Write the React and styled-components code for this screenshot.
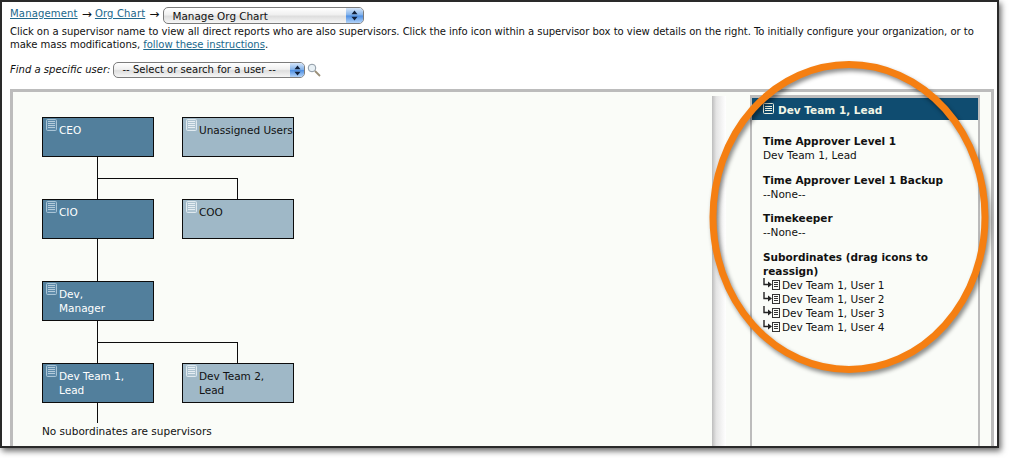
import styled, { createGlobalStyle } from "styled-components";

const GlobalStyle = createGlobalStyle`
  html, body {
    margin: 0;
    background: #ffffff;
  }
  body {
    height: 458px;
    overflow: hidden;
    font-family: "DejaVu Sans", Verdana, sans-serif;
    font-size: 10.5px;
    line-height: 14px;
    color: #111111;
  }
`;

const NodeIcon = ({ dark }) => (
  <IconSvg width="11" height="12" viewBox="0 0 11 12" fill="none">
    <rect
      x="0.5"
      y="0.5"
      width="10"
      height="11"
      rx="1"
      stroke={dark ? "#a9c4d6" : "#dfe9ef"}
      fill={dark ? "#5f8cab" : "#aec4d1"}
    />
    <path d="M2 2.5h7M2 4.5h7M2 6.5h7M2 8.5h7" stroke={dark ? "#b4cbda" : "#e6eef3"} />
  </IconSvg>
);

const HeaderIcon = () => (
  <HeaderIconSvg width="11" height="11" viewBox="0 0 11 11" fill="none" stroke="#f2f6e6">
    <rect x="0.5" y="0.5" width="10" height="10" rx="1" />
    <path d="M2 3.5h7M2 5.5h7M2 7.5h7" />
  </HeaderIconSvg>
);

const SubordinateIcon = () => (
  <IconSvg width="8" height="10" viewBox="0 0 8 10" fill="none" stroke="#333333">
    <rect x="0.5" y="0.5" width="7" height="9" />
    <path d="M2 2.5h4M2 4.5h4M2 6.5h4" />
  </IconSvg>
);

const ArrowIcon = () => (
  <ArrowSvg width="9" height="11" viewBox="0 0 9 11" fill="none" stroke="#222222">
    <path d="M1 0v6.5H5.5" strokeWidth="1.4" />
    <path d="M5 3.5v6l4-3z" fill="#222222" stroke="none" />
  </ArrowSvg>
);

const Stepper = ({ small }) => (
  <StepperBox $small={small}>
    <svg width="7" height="11" viewBox="0 0 7 11" fill="#10203a">
      <path d="M3.5 0.5L6.5 4.2H0.5zM3.5 10.5L0.5 6.8H6.5z" />
    </svg>
  </StepperBox>
);

const MagnifierIcon = () => (
  <MagnifierSvg width="14" height="14" viewBox="0 0 14 14" fill="none">
    <circle cx="5" cy="5" r="3.8" stroke="#8c98a3" fill="#e8f0f5" />
    <path d="M8 8l5 5" stroke="#9a8f78" strokeWidth="1.8" />
  </MagnifierSvg>
);

const OrgNode = ({ dark, children }) => (
  <Node $dark={dark}>
    <NodeIcon dark={dark} />
    <NodeLabel>{children}</NodeLabel>
  </Node>
);

const approvers = [
  { title: "Time Approver Level 1", value: "Dev Team 1, Lead" },
  { title: "Time Approver Level 1 Backup", value: "--None--" },
  { title: "Timekeeper", value: "--None--" },
];

const subordinates = ["User 1", "User 2", "User 3", "User 4"];

const App = () => {
  return (
    <>
      <GlobalStyle />
      <Frame>
        <Intro>
          <Breadcrumb>
            <TextLink>Management</TextLink>
            <Sep>→</Sep>
            <TextLink>Org Chart</TextLink>
            <Sep>→</Sep>
            <ViewSelect>
              Manage Org Chart
              <Stepper />
            </ViewSelect>
          </Breadcrumb>
          <Help>
            Click on a supervisor name to view all direct reports who are also supervisors. Click the
            info icon within a supervisor box to view details on the right. To initially configure your
            organization, or to make mass modifications, <TextLink>follow these instructions</TextLink>.
          </Help>
          <FindRow>
            <FindLabel>Find a specific user:</FindLabel>
            <UserSelect>
              -- Select or search for a user --
              <Stepper small />
            </UserSelect>
            <MagnifierIcon />
          </FindRow>
        </Intro>

        <Workspace>
          <ChartColumn>
            <NodeRow>
              <OrgNode dark>CEO</OrgNode>
              <OrgNode>Unassigned Users</OrgNode>
            </NodeRow>
            <Connector>
              <Branch />
            </Connector>
            <NodeRow>
              <OrgNode dark>CIO</OrgNode>
              <OrgNode>COO</OrgNode>
            </NodeRow>
            <Connector />
            <NodeRow>
              <OrgNode dark>
                Dev,
                <br />
                Manager
              </OrgNode>
            </NodeRow>
            <Connector>
              <Branch />
            </Connector>
            <NodeRow>
              <OrgNode dark>
                Dev Team 1,
                <br />
                Lead
              </OrgNode>
              <OrgNode>
                Dev Team 2,
                <br />
                Lead
              </OrgNode>
            </NodeRow>
            <Connector $short />
            <NoReports>No subordinates are supervisors</NoReports>
          </ChartColumn>
          <Splitter />
          <DetailPanel>
            <PanelHeader>
              <HeaderIcon />
              Dev Team 1, Lead
            </PanelHeader>
            <PanelBody>
              {approvers.map((item) => (
                <Group key={item.title}>
                  <GroupTitle>{item.title}</GroupTitle>
                  <div>{item.value}</div>
                </Group>
              ))}
              <Group>
                <GroupTitle>Subordinates (drag icons to reassign)</GroupTitle>
                {subordinates.map((name) => (
                  <Subordinate key={name}>
                    <ArrowIcon />
                    <SubordinateIcon />
                    <SubordinateName>Dev Team 1, {name}</SubordinateName>
                  </Subordinate>
                ))}
              </Group>
            </PanelBody>
          </DetailPanel>
        </Workspace>

        <Highlight width="300" height="330" viewBox="0 0 300 330" fill="none">
          <ellipse cx="150" cy="164" rx="136" ry="152.5" stroke="#f57f12" strokeWidth="7" />
        </Highlight>
      </Frame>
    </>
  );
};

const IconSvg = styled.svg`
  flex: none;
  display: block;
`;

const HeaderIconSvg = styled(IconSvg)`
  margin-top: -4px;
`;

const ArrowSvg = styled(IconSvg)`
  margin-top: -2px;
`;

const MagnifierSvg = styled.svg`
  flex: none;
  margin-left: 2px;
`;

const Frame = styled.div`
  position: relative;
  box-sizing: border-box;
  width: 999px;
  height: 448px;
  display: flex;
  flex-direction: column;
  overflow: hidden;
  border: 2px solid #2a2a2a;
  box-shadow: 2px 3px 6px rgba(0, 0, 0, 0.6);
  background: #ffffff;
`;

const Intro = styled.div`
  height: 87px;
  flex: none;
  padding: 5px 0 0 8px;
  box-sizing: border-box;
  font-size: 10.05px;
`;

const Breadcrumb = styled.div`
  height: 18px;
  display: flex;
  align-items: flex-start;
  letter-spacing: 0.15px;
`;

const TextLink = styled.a`
  color: #20688c;
  text-decoration: underline;
`;

const Sep = styled.span`
  margin: 0 3px 0 4px;
  font-size: 12px;
`;

const SelectBase = styled.div`
  position: relative;
  box-sizing: border-box;
  display: flex;
  align-items: center;
  border: 1px solid #7c7c7c;
  background: linear-gradient(#ffffff, #f0f0f0 45%, #dedede 55%, #f6f6f6);
  color: #111111;
  overflow: hidden;
`;

const ViewSelect = styled(SelectBase)`
  width: 201px;
  height: 17px;
  padding-left: 9px;
  border-radius: 5px;
  font-size: 10.4px;
  letter-spacing: 0;
`;

const UserSelect = styled(SelectBase)`
  width: 192px;
  height: 16px;
  margin-left: 3px;
  padding-left: 8px;
  border-radius: 5px;
`;

const StepperBox = styled.div`
  position: absolute;
  top: 0;
  right: 0;
  bottom: 0;
  width: ${(props) => (props.$small ? "14px" : "17px")};
  display: flex;
  align-items: center;
  justify-content: center;
  background: linear-gradient(#d6e6fa, #7fb0ea 48%, #4c8ee4 52%, #b4d4f8);
`;

const Help = styled.div`
  width: 975px;
  line-height: 13px;
  letter-spacing: -0.045px;
`;

const FindRow = styled.div`
  display: flex;
  align-items: center;
  margin-top: 11px;
  height: 16px;
`;

const FindLabel = styled.em`
  font-style: italic;
`;

const Workspace = styled.div`
  flex: 1;
  min-height: 0;
  margin-left: 8px;
  width: 984px;
  box-sizing: border-box;
  display: flex;
  border: 3px solid #bcbcbc;
  border-bottom: none;
  background: #fafcf8;
`;

const ChartColumn = styled.div`
  width: 670px;
  flex: none;
  padding: 25px 0 0 29px;
`;

const NodeRow = styled.div`
  display: flex;
  gap: 28px;
`;

const Node = styled.div`
  box-sizing: border-box;
  width: 112px;
  height: 40px;
  display: flex;
  gap: 2px;
  padding: 1px 3px;
  border: 1px solid #0c0c0c;
  background: ${(props) => (props.$dark ? "#527f9c" : "#9fb8c7")};
  color: ${(props) => (props.$dark ? "#ffffff" : "#111111")};
`;

const NodeLabel = styled.div`
  margin-top: 4px;
  white-space: nowrap;
`;

const Connector = styled.div`
  width: 1px;
  height: ${(props) => (props.$short ? "20px" : "42px")};
  margin-left: 55px;
  background: #0c0c0c;
`;

const Branch = styled.div`
  box-sizing: border-box;
  width: 141px;
  height: 21px;
  position: relative;
  top: 21px;
  border-top: 1px solid #0c0c0c;
  border-right: 1px solid #0c0c0c;
`;

const NoReports = styled.div`
  margin-top: 1px;
`;

const Splitter = styled.div`
  width: 14px;
  flex: none;
  margin-top: 4px;
  background: linear-gradient(90deg, #bdbdbd, #e4e4e4 30%, #f4f4f4 70%, #ffffff);
`;

const DetailPanel = styled.div`
  width: 230px;
  flex: none;
  box-sizing: border-box;
  margin: 3px 0 0 24px;
  border: 2px solid #bcbcbc;
  border-top-width: 3px;
  border-bottom: none;
`;

const PanelHeader = styled.div`
  box-sizing: border-box;
  height: 22px;
  display: flex;
  align-items: center;
  gap: 4px;
  padding: 2px 0 0 11px;
  background: #0f4c70;
  color: #f2f6e6;
  font-weight: bold;
`;

const PanelBody = styled.div`
  display: flex;
  flex-direction: column;
  gap: 10.5px;
  padding: 14px 8px 0 11px;
`;

const Group = styled.div``;

const GroupTitle = styled.div`
  font-weight: bold;
`;

const Subordinate = styled.div`
  display: flex;
  align-items: center;
  height: 14px;
`;

const SubordinateName = styled.span`
  margin-left: 2px;
`;

const Highlight = styled.svg`
  position: absolute;
  left: 697px;
  top: 51px;
  filter: drop-shadow(2px 3px 2px rgba(0, 0, 0, 0.45));
  pointer-events: none;
`;

export default App;
